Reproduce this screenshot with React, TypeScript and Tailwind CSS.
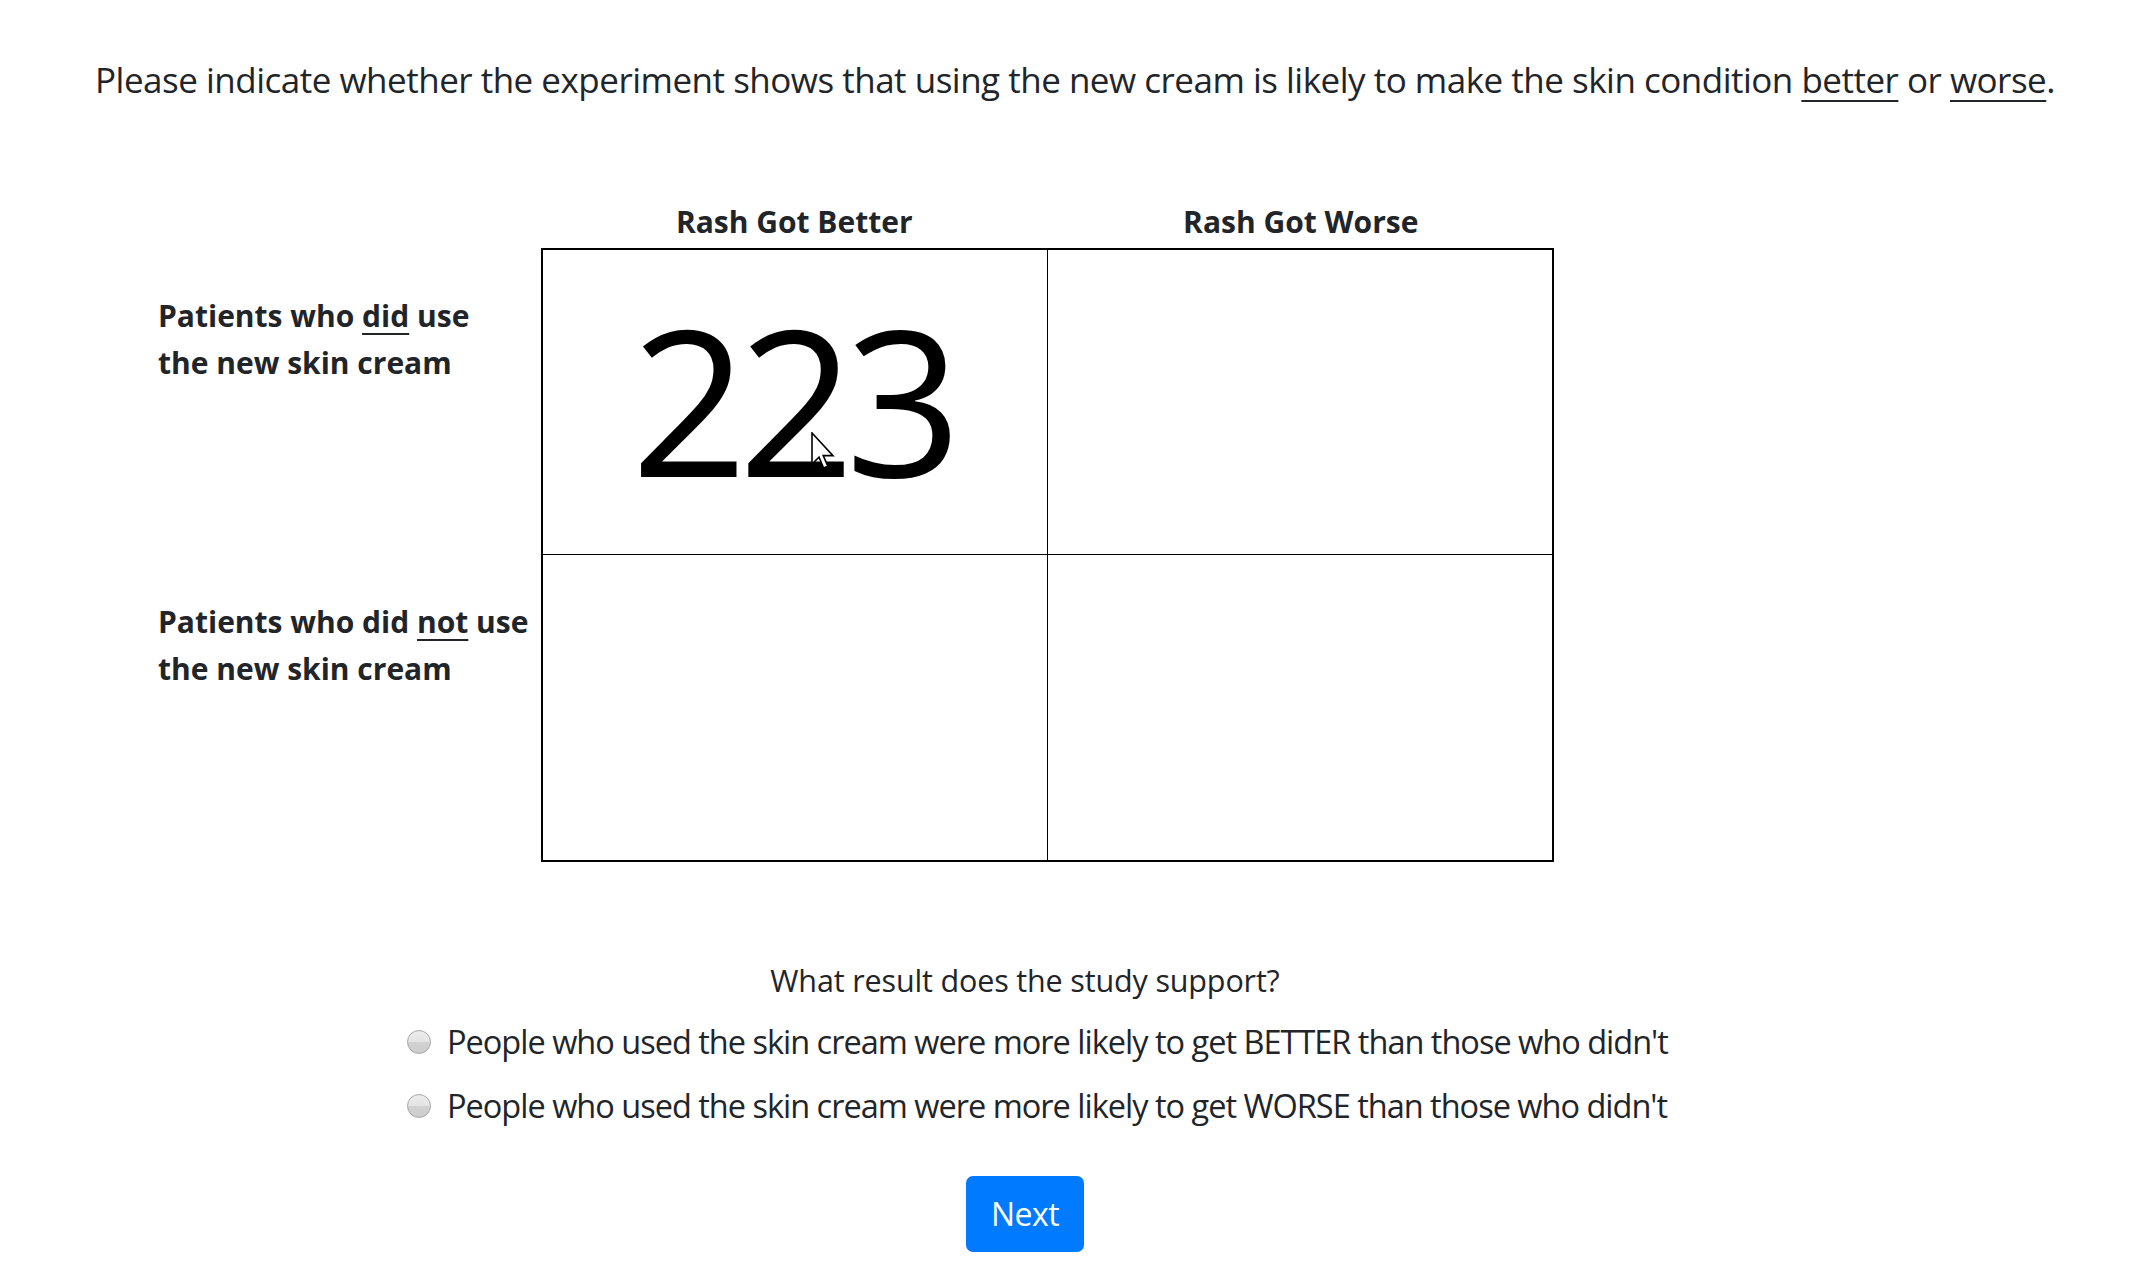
import React from 'react';

const Cursor: React.FC = () => (
    <svg
        className="absolute left-[811px] top-[432px] pointer-events-none"
        width="24"
        height="38"
        viewBox="0 0 12 19"
    >
        <path
            d="M0.5 0.5 L0.5 16 L4 12.6 L6.3 18 L8.4 17.1 L6.1 11.8 L11 11.8 Z"
            fill="#fff"
            stroke="#000"
            strokeWidth="0.8"
            strokeLinejoin="miter"
        />
    </svg>
);

const Radio: React.FC = () => (
    <span className="inline-block w-[24px] h-[24px] rounded-full border border-[#a9a9a9] bg-[linear-gradient(to_bottom,#ececec_0%,#e4e4e4_48%,#d2d2d2_52%,#cccccc_100%)] shrink-0" />
);

export default function App() {
    const options = [
        "People who used the skin cream were more likely to get BETTER than those who didn't",
        "People who used the skin cream were more likely to get WORSE than those who didn't",
    ];

    return (
        <div className="relative min-h-screen w-full bg-white text-[#212529] font-['Open_Sans',sans-serif]">
            <p className="pt-[53px] pl-[14px] text-center text-[35px] leading-[54px] tracking-[-0.5px]">
                Please indicate whether the experiment shows that using the new cream is likely to make the
                skin condition <u className="underline-offset-[7px] decoration-2">better</u> or{' '}
                <u className="underline-offset-[7px] decoration-2">worse</u>.
            </p>

            <div className="flex ml-[158px] mt-[92px]">
                <div className="w-[383px] pt-[49px] text-[30px] font-bold leading-[47px]">
                    <div className="h-[306px] pt-[44px]">
                        Patients who <u className="underline-offset-[6px] decoration-2">did</u> use
                        <br />
                        the new skin cream
                    </div>
                    <div className="h-[306px] pt-[44px]">
                        Patients who did <u className="underline-offset-[6px] decoration-2">not</u> use
                        <br />
                        the new skin cream
                    </div>
                </div>

                <div className="w-[1013px]">
                    <div className="grid grid-cols-2 h-[49px] pb-[3px] text-[30px] font-bold leading-[46px] text-center">
                        <div>Rash Got Better</div>
                        <div>Rash Got Worse</div>
                    </div>
                    <div className="grid grid-cols-2 grid-rows-[305px_305px] border-2 border-black">
                        <div className="border-r border-b border-black flex items-center justify-center">
                            <span className="text-[204px] leading-none text-black tracking-[-9.5px] pr-[6px] pb-[8px]">
                                223
                            </span>
                        </div>
                        <div className="border-b border-black" />
                        <div className="border-r border-black" />
                        <div />
                    </div>
                </div>
            </div>

            <div className="mt-[94px] pr-[86px] flex flex-col">
                <div className="text-center text-[30.5px] leading-[48px] tracking-[-0.15px]">
                    What result does the study support?
                </div>
                <div className="mt-[6px] ml-[407px] flex flex-col">
                    {options.map((o) => (
                        <label key={o} className="flex items-center gap-[16px] h-[64px] text-[32.5px] tracking-[-1px]">
                            <Radio />
                            <span>{o}</span>
                        </label>
                    ))}
                </div>
                <div className="mt-[38px] flex justify-center">
                    <button className="w-[118px] h-[76px] rounded-[7px] bg-[#007bff] text-white text-[32px] tracking-[-0.5px]">
                        Next
                    </button>
                </div>
            </div>

            <Cursor />
        </div>
    );
}
